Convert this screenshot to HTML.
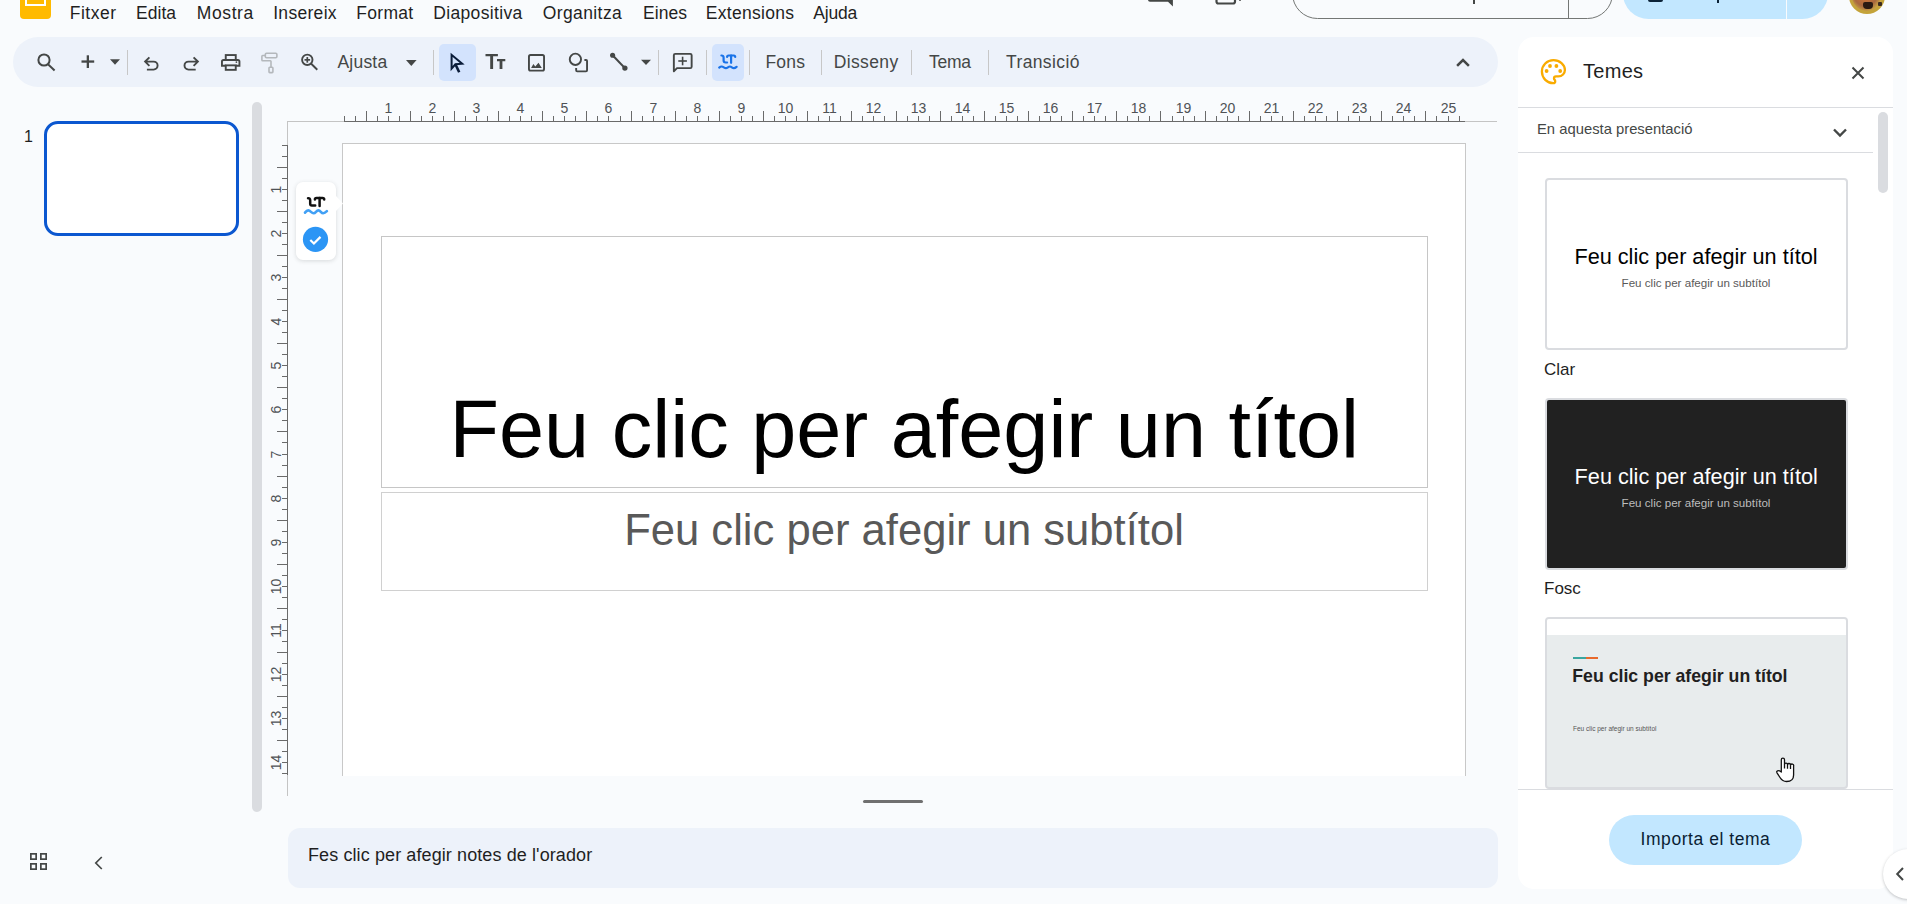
<!DOCTYPE html>
<html><head><meta charset="utf-8">
<style>
*{box-sizing:border-box;margin:0;padding:0}
html,body{width:1907px;height:904px;overflow:hidden;background:#f9fbfd;font-family:"Liberation Sans",sans-serif;color:#1f1f1f}
.a{position:absolute}
.menu{position:absolute;top:2.5px;font-size:17.5px;color:#1f1f1f;white-space:nowrap;line-height:20px}
.tb{position:absolute;left:13px;top:37px;width:1485px;height:50px;border-radius:25px;background:#edf2fa}
.sep{position:absolute;top:50px;width:1px;height:25px;background:#c7c7c7}
.tbt{position:absolute;top:51.8px;font-size:17.5px;color:#444746;white-space:nowrap;line-height:20px}
svg{position:absolute;overflow:visible}
</style></head><body>

<div class="a" style="left:20px;top:-14px;width:31px;height:33px;background:#ffba00;border-radius:4px"></div>
<div class="a" style="left:25.4px;top:-8px;width:20.2px;height:14.4px;border:2.4px solid #fff;border-top:none"></div>
<div class="menu" style="left:69.7px;letter-spacing:0.54px">Fitxer</div>
<div class="menu" style="left:136.0px;letter-spacing:0.05px">Edita</div>
<div class="menu" style="left:196.8px;letter-spacing:0.60px">Mostra</div>
<div class="menu" style="left:273.2px;letter-spacing:0.30px">Insereix</div>
<div class="menu" style="left:356.2px;letter-spacing:0.32px">Format</div>
<div class="menu" style="left:433.2px;letter-spacing:0.35px">Diapositiva</div>
<div class="menu" style="left:542.7px;letter-spacing:0.40px">Organitza</div>
<div class="menu" style="left:642.9px;letter-spacing:0.10px">Eines</div>
<div class="menu" style="left:705.8px;letter-spacing:0.28px">Extensions</div>
<div class="menu" style="left:813.3px;letter-spacing:-0.22px">Ajuda</div>
<svg style="left:0;top:0" width="1300" height="30"><path d="M1148 -12 H1172.9 V6.6 L1168 1.8 H1150 Q1148 1.8 1148 -0.2 Z" fill="#444746"/></svg>
<svg style="left:1210px;top:-20px" width="40" height="30"><rect x="6.5" y="6" width="18.5" height="17.5" rx="2" fill="none" stroke="#444746" stroke-width="2.2"/><circle cx="30" cy="20" r="1" fill="#444746"/></svg>
<div class="a" style="left:1292px;top:-32px;width:321px;height:51px;border:1.3px solid #747775;border-radius:26px"></div>
<div class="a" style="left:1567.5px;top:-32px;width:1.3px;height:51px;background:#747775"></div>
<div class="a" style="left:1473px;top:-5px;width:2px;height:8.5px;background:#444746"></div>
<div class="a" style="left:1623px;top:-32px;width:205px;height:51px;background:#c2e7ff;border-radius:26px"></div>
<div class="a" style="left:1786px;top:-32px;width:1.2px;height:51px;background:#f9fbfd"></div>
<div class="a" style="left:1648px;top:-11px;width:15px;height:13px;border:2.2px solid #0b2338;border-radius:2px"></div>
<div class="a" style="left:1716.5px;top:-6px;width:2px;height:9px;background:#0b2338"></div>
<div class="a" style="left:1848.7px;top:-22.8px;width:36.6px;height:36.6px;border-radius:50%;background:#c4a33a"></div>
<div class="a" style="left:1852px;top:-19.5px;width:30px;height:30px;border-radius:50%;background:radial-gradient(ellipse at 45% 30%,#c0703a 0 35%,#a8683f 55%,#caa545 75%,#c4a33a 100%)"></div>
<div class="a" style="left:1862.5px;top:2px;width:10px;height:6.5px;border-radius:2px 2px 4px 4px;background:#2a1a12"></div>
<div class="a" style="left:1878px;top:1.5px;width:3.5px;height:4px;border-radius:1px;background:#3a2a20"></div>
<div class="tb"></div>
<div class="sep" style="left:127px"></div>
<div class="sep" style="left:433px"></div>
<div class="sep" style="left:658px"></div>
<div class="sep" style="left:706px"></div>
<div class="sep" style="left:749px"></div>
<div class="sep" style="left:821px"></div>
<div class="sep" style="left:911px"></div>
<div class="sep" style="left:988px"></div>
<div class="a" style="left:439px;top:44px;width:37px;height:37px;border-radius:5px;background:#d3e3fd"></div>
<div class="a" style="left:712px;top:44px;width:32px;height:37px;border-radius:5px;background:#d3e3fd"></div>
<svg style="left:0;top:0" width="1907" height="100">
<g fill="none" stroke="#444746" stroke-width="2">
<circle cx="44" cy="60" r="5.6"/><line x1="48" y1="64.2" x2="54.6" y2="70.4"/>
</g>
<g fill="#444746">
<rect x="81.5" y="60.4" width="12.7" height="2.3"/><rect x="86.7" y="55.3" width="2.3" height="12.7"/>
<path d="M110 59.2h10l-5 5.5z"/>
<path d="M406 60h10.6l-5.3 6z"/>
<path d="M641 59.8h10l-5 5.2z"/>
</g>
<g fill="none" stroke="#444746" stroke-width="1.9">
<path d="M149.4 57.3 L145.1 61.6 L149.4 65.9 M145.1 61.6 H153.6 A4 4 0 0 1 153.6 69.6 H146.9"/>
<path d="M193.6 57.3 L197.9 61.6 L193.6 65.9 M197.9 61.6 H188.5 A4 4 0 0 0 188.5 69.6 H195.7"/>
<rect x="225.75" y="55.05" width="10" height="4.9"/>
<path d="M225.8 65.75 H221.95 V61.5 Q221.95 59.95 223.5 59.95 H237.9 Q239.45 59.95 239.45 61.5 V65.75 H235.7"/>
<rect x="225.75" y="65.35" width="10" height="4.5"/>
</g>
<circle cx="236.4" cy="62.1" r="0.9" fill="#444746"/>
<g fill="none" stroke="#b4b8bc" stroke-width="1.6">
<rect x="265.3" y="53.2" width="11.6" height="4.6" rx="1.2"/>
<path d="M265.3 55.5 H262.6 Q261.9 55.5 261.9 56.2 V60 Q261.9 60.7 262.6 60.7 H270.3 Q271 60.7 271 61.4 V67.3"/>
<rect x="269" y="67.3" width="3.9" height="5.3" rx="0.8"/>
</g>
<g fill="none" stroke="#444746" stroke-width="1.9">
<circle cx="307.3" cy="59.8" r="5.2"/><line x1="311.2" y1="63.7" x2="317.3" y2="69.7"/>
</g>
<g fill="#444746"><rect x="304.5" y="59" width="5.6" height="1.7"/><rect x="306.45" y="57.05" width="1.7" height="5.6"/></g>
<path d="M451.6 54.8 V68.6 L455.4 64.3 L462.2 63.7 Z" fill="none" stroke="#0b1d3a" stroke-width="2" stroke-linejoin="miter"/>
<line x1="455.3" y1="64" x2="459.2" y2="72.2" stroke="#0b1d3a" stroke-width="2.6"/>
<g fill="#444746">
<path d="M485.5 54h12.4v2.3h-4.8v12.6h-2.9v-12.6h-4.7z"/>
<path d="M497 59h8.3v2.2h-2.9v7.7h-2.8v-7.7h-2.6z"/>
</g>
<rect x="528.95" y="55.05" width="15.1" height="15.6" rx="1.6" fill="none" stroke="#444746" stroke-width="1.9"/>
<path d="M531.1 67.9 L533.4 64.1 L535.3 66.5 L538.5 62.8 L541.8 67.9 Z" fill="#444746"/>
<g fill="none" stroke="#444746" stroke-width="1.9">
<circle cx="575.4" cy="59.3" r="5.65"/>
<path d="M584.4 59.95 H586 Q587.05 59.95 587.05 61 V70.3 Q587.05 71.35 586 71.35 H577.2 Q576.15 71.35 576.15 70.3 V67.9"/>
</g>
<line x1="612.6" y1="55.2" x2="624.9" y2="68.1" stroke="#444746" stroke-width="2.1"/>
<circle cx="612.6" cy="55.2" r="2.55" fill="#444746"/><circle cx="624.9" cy="68.1" r="2.65" fill="#444746"/>
<path d="M673.85 71.3 V55.3 Q673.85 53.85 675.3 53.85 H690.2 Q691.65 53.85 691.65 55.3 V66.7 Q691.65 68.15 690.2 68.15 H677 Z" fill="none" stroke="#444746" stroke-width="1.9" stroke-linejoin="round"/>
<g fill="#444746"><rect x="678.3" y="60.2" width="8.6" height="1.6"/><rect x="681.8" y="56.7" width="1.6" height="8.6"/></g>
<g fill="none" stroke="#444746" stroke-width="2.5" stroke-linecap="square"><path d="M1458 65l5-5 5 5"/></g>
</svg>
<svg style="left:0;top:0" width="800" height="100"><g fill="none" stroke="#1a73e8" stroke-width="2.2" stroke-linecap="round" stroke-linejoin="round">
<path d="M721.4 55.5 Q723.6 55.4 723.6 57.8 V60.6 Q723.6 62.5 725.6 62.5 H727.1"/>
<path d="M727.1 56.9 Q727.1 55.5 728.5 55.5 H733.8 Q735.2 55.5 735.2 56.9"/>
<line x1="731.1" y1="55.5" x2="731.1" y2="62.8"/>
<path d="M719.2 67.6 C720 66.9 720.9 66.5 721.7 66.5 C723.3 66.5 724.3 68.2 725.9 68.2 C727.5 68.2 728.3 66.5 729.9 66.5 C731.5 66.5 732.2 68.2 733.8 68.2 C734.8 68.2 735.8 67.5 736.6 66.8"/>
</g></svg>
<div class="tbt" style="left:337.5px;letter-spacing:0.20px">Ajusta</div>
<div class="tbt" style="left:765.4px;letter-spacing:0.27px">Fons</div>
<div class="tbt" style="left:833.7px;letter-spacing:0.37px">Disseny</div>
<div class="tbt" style="left:929.0px;letter-spacing:-0.27px">Tema</div>
<div class="tbt" style="left:1006.0px;letter-spacing:0.38px">Transició</div>
<div class="a" style="left:24px;top:128px;font-size:16px;color:#1f1f1f;line-height:18px">1</div>
<div class="a" style="left:44px;top:121px;width:195px;height:115px;border:3px solid #0b57d0;border-radius:14px;background:#fff"></div>
<div class="a" style="left:252px;top:102px;width:10px;height:710px;border-radius:5px;background:#dadce0"></div>
<svg style="left:30px;top:853px" width="18" height="18"><g fill="none" stroke="#444746" stroke-width="1.7"><rect x="0.85" y="0.85" width="5.3" height="5.3"/><rect x="10.85" y="0.85" width="5.3" height="5.3"/><rect x="0.85" y="10.85" width="5.3" height="5.3"/><rect x="10.85" y="10.85" width="5.3" height="5.3"/></g></svg>
<svg style="left:90px;top:852px" width="20" height="20"><path d="M11.8 5l-6 6 6 6" fill="none" stroke="#444746" stroke-width="1.7"/></svg>
<svg style="left:0;top:0" width="1907" height="904"><g font-family="Liberation Sans" font-size="14" fill="#4f5256"><line x1="287" y1="121.5" x2="344" y2="121.5" stroke="#c4c4c4" stroke-width="1"/><line x1="1465" y1="121.5" x2="1497" y2="121.5" stroke="#c4c4c4" stroke-width="1"/><line x1="344" y1="121.5" x2="1465" y2="121.5" stroke="#6a6a6a" stroke-width="1"/><line x1="344.5" y1="116" x2="344.5" y2="122" stroke="#6a6a6a" stroke-width="1"/><line x1="355.5" y1="116" x2="355.5" y2="122" stroke="#6a6a6a" stroke-width="1"/><line x1="366.5" y1="111" x2="366.5" y2="122" stroke="#6a6a6a" stroke-width="1"/><line x1="377.5" y1="116" x2="377.5" y2="122" stroke="#6a6a6a" stroke-width="1"/><line x1="388.5" y1="116" x2="388.5" y2="122" stroke="#6a6a6a" stroke-width="1"/><line x1="399.5" y1="116" x2="399.5" y2="122" stroke="#6a6a6a" stroke-width="1"/><line x1="410.5" y1="111" x2="410.5" y2="122" stroke="#6a6a6a" stroke-width="1"/><line x1="421.5" y1="116" x2="421.5" y2="122" stroke="#6a6a6a" stroke-width="1"/><line x1="432.5" y1="116" x2="432.5" y2="122" stroke="#6a6a6a" stroke-width="1"/><line x1="443.5" y1="116" x2="443.5" y2="122" stroke="#6a6a6a" stroke-width="1"/><line x1="454.5" y1="111" x2="454.5" y2="122" stroke="#6a6a6a" stroke-width="1"/><line x1="465.5" y1="116" x2="465.5" y2="122" stroke="#6a6a6a" stroke-width="1"/><line x1="476.5" y1="116" x2="476.5" y2="122" stroke="#6a6a6a" stroke-width="1"/><line x1="487.5" y1="116" x2="487.5" y2="122" stroke="#6a6a6a" stroke-width="1"/><line x1="498.5" y1="111" x2="498.5" y2="122" stroke="#6a6a6a" stroke-width="1"/><line x1="509.5" y1="116" x2="509.5" y2="122" stroke="#6a6a6a" stroke-width="1"/><line x1="520.5" y1="116" x2="520.5" y2="122" stroke="#6a6a6a" stroke-width="1"/><line x1="531.5" y1="116" x2="531.5" y2="122" stroke="#6a6a6a" stroke-width="1"/><line x1="542.5" y1="111" x2="542.5" y2="122" stroke="#6a6a6a" stroke-width="1"/><line x1="553.5" y1="116" x2="553.5" y2="122" stroke="#6a6a6a" stroke-width="1"/><line x1="564.5" y1="116" x2="564.5" y2="122" stroke="#6a6a6a" stroke-width="1"/><line x1="575.5" y1="116" x2="575.5" y2="122" stroke="#6a6a6a" stroke-width="1"/><line x1="586.5" y1="111" x2="586.5" y2="122" stroke="#6a6a6a" stroke-width="1"/><line x1="597.5" y1="116" x2="597.5" y2="122" stroke="#6a6a6a" stroke-width="1"/><line x1="608.5" y1="116" x2="608.5" y2="122" stroke="#6a6a6a" stroke-width="1"/><line x1="620.5" y1="116" x2="620.5" y2="122" stroke="#6a6a6a" stroke-width="1"/><line x1="631.5" y1="111" x2="631.5" y2="122" stroke="#6a6a6a" stroke-width="1"/><line x1="642.5" y1="116" x2="642.5" y2="122" stroke="#6a6a6a" stroke-width="1"/><line x1="653.5" y1="116" x2="653.5" y2="122" stroke="#6a6a6a" stroke-width="1"/><line x1="664.5" y1="116" x2="664.5" y2="122" stroke="#6a6a6a" stroke-width="1"/><line x1="675.5" y1="111" x2="675.5" y2="122" stroke="#6a6a6a" stroke-width="1"/><line x1="686.5" y1="116" x2="686.5" y2="122" stroke="#6a6a6a" stroke-width="1"/><line x1="697.5" y1="116" x2="697.5" y2="122" stroke="#6a6a6a" stroke-width="1"/><line x1="708.5" y1="116" x2="708.5" y2="122" stroke="#6a6a6a" stroke-width="1"/><line x1="719.5" y1="111" x2="719.5" y2="122" stroke="#6a6a6a" stroke-width="1"/><line x1="730.5" y1="116" x2="730.5" y2="122" stroke="#6a6a6a" stroke-width="1"/><line x1="741.5" y1="116" x2="741.5" y2="122" stroke="#6a6a6a" stroke-width="1"/><line x1="752.5" y1="116" x2="752.5" y2="122" stroke="#6a6a6a" stroke-width="1"/><line x1="763.5" y1="111" x2="763.5" y2="122" stroke="#6a6a6a" stroke-width="1"/><line x1="774.5" y1="116" x2="774.5" y2="122" stroke="#6a6a6a" stroke-width="1"/><line x1="785.5" y1="116" x2="785.5" y2="122" stroke="#6a6a6a" stroke-width="1"/><line x1="796.5" y1="116" x2="796.5" y2="122" stroke="#6a6a6a" stroke-width="1"/><line x1="807.5" y1="111" x2="807.5" y2="122" stroke="#6a6a6a" stroke-width="1"/><line x1="818.5" y1="116" x2="818.5" y2="122" stroke="#6a6a6a" stroke-width="1"/><line x1="829.5" y1="116" x2="829.5" y2="122" stroke="#6a6a6a" stroke-width="1"/><line x1="840.5" y1="116" x2="840.5" y2="122" stroke="#6a6a6a" stroke-width="1"/><line x1="851.5" y1="111" x2="851.5" y2="122" stroke="#6a6a6a" stroke-width="1"/><line x1="862.5" y1="116" x2="862.5" y2="122" stroke="#6a6a6a" stroke-width="1"/><line x1="873.5" y1="116" x2="873.5" y2="122" stroke="#6a6a6a" stroke-width="1"/><line x1="884.5" y1="116" x2="884.5" y2="122" stroke="#6a6a6a" stroke-width="1"/><line x1="896.5" y1="111" x2="896.5" y2="122" stroke="#6a6a6a" stroke-width="1"/><line x1="907.5" y1="116" x2="907.5" y2="122" stroke="#6a6a6a" stroke-width="1"/><line x1="918.5" y1="116" x2="918.5" y2="122" stroke="#6a6a6a" stroke-width="1"/><line x1="929.5" y1="116" x2="929.5" y2="122" stroke="#6a6a6a" stroke-width="1"/><line x1="940.5" y1="111" x2="940.5" y2="122" stroke="#6a6a6a" stroke-width="1"/><line x1="951.5" y1="116" x2="951.5" y2="122" stroke="#6a6a6a" stroke-width="1"/><line x1="962.5" y1="116" x2="962.5" y2="122" stroke="#6a6a6a" stroke-width="1"/><line x1="973.5" y1="116" x2="973.5" y2="122" stroke="#6a6a6a" stroke-width="1"/><line x1="984.5" y1="111" x2="984.5" y2="122" stroke="#6a6a6a" stroke-width="1"/><line x1="995.5" y1="116" x2="995.5" y2="122" stroke="#6a6a6a" stroke-width="1"/><line x1="1006.5" y1="116" x2="1006.5" y2="122" stroke="#6a6a6a" stroke-width="1"/><line x1="1017.5" y1="116" x2="1017.5" y2="122" stroke="#6a6a6a" stroke-width="1"/><line x1="1028.5" y1="111" x2="1028.5" y2="122" stroke="#6a6a6a" stroke-width="1"/><line x1="1039.5" y1="116" x2="1039.5" y2="122" stroke="#6a6a6a" stroke-width="1"/><line x1="1050.5" y1="116" x2="1050.5" y2="122" stroke="#6a6a6a" stroke-width="1"/><line x1="1061.5" y1="116" x2="1061.5" y2="122" stroke="#6a6a6a" stroke-width="1"/><line x1="1072.5" y1="111" x2="1072.5" y2="122" stroke="#6a6a6a" stroke-width="1"/><line x1="1083.5" y1="116" x2="1083.5" y2="122" stroke="#6a6a6a" stroke-width="1"/><line x1="1094.5" y1="116" x2="1094.5" y2="122" stroke="#6a6a6a" stroke-width="1"/><line x1="1105.5" y1="116" x2="1105.5" y2="122" stroke="#6a6a6a" stroke-width="1"/><line x1="1116.5" y1="111" x2="1116.5" y2="122" stroke="#6a6a6a" stroke-width="1"/><line x1="1127.5" y1="116" x2="1127.5" y2="122" stroke="#6a6a6a" stroke-width="1"/><line x1="1138.5" y1="116" x2="1138.5" y2="122" stroke="#6a6a6a" stroke-width="1"/><line x1="1149.5" y1="116" x2="1149.5" y2="122" stroke="#6a6a6a" stroke-width="1"/><line x1="1160.5" y1="111" x2="1160.5" y2="122" stroke="#6a6a6a" stroke-width="1"/><line x1="1172.5" y1="116" x2="1172.5" y2="122" stroke="#6a6a6a" stroke-width="1"/><line x1="1183.5" y1="116" x2="1183.5" y2="122" stroke="#6a6a6a" stroke-width="1"/><line x1="1194.5" y1="116" x2="1194.5" y2="122" stroke="#6a6a6a" stroke-width="1"/><line x1="1205.5" y1="111" x2="1205.5" y2="122" stroke="#6a6a6a" stroke-width="1"/><line x1="1216.5" y1="116" x2="1216.5" y2="122" stroke="#6a6a6a" stroke-width="1"/><line x1="1227.5" y1="116" x2="1227.5" y2="122" stroke="#6a6a6a" stroke-width="1"/><line x1="1238.5" y1="116" x2="1238.5" y2="122" stroke="#6a6a6a" stroke-width="1"/><line x1="1249.5" y1="111" x2="1249.5" y2="122" stroke="#6a6a6a" stroke-width="1"/><line x1="1260.5" y1="116" x2="1260.5" y2="122" stroke="#6a6a6a" stroke-width="1"/><line x1="1271.5" y1="116" x2="1271.5" y2="122" stroke="#6a6a6a" stroke-width="1"/><line x1="1282.5" y1="116" x2="1282.5" y2="122" stroke="#6a6a6a" stroke-width="1"/><line x1="1293.5" y1="111" x2="1293.5" y2="122" stroke="#6a6a6a" stroke-width="1"/><line x1="1304.5" y1="116" x2="1304.5" y2="122" stroke="#6a6a6a" stroke-width="1"/><line x1="1315.5" y1="116" x2="1315.5" y2="122" stroke="#6a6a6a" stroke-width="1"/><line x1="1326.5" y1="116" x2="1326.5" y2="122" stroke="#6a6a6a" stroke-width="1"/><line x1="1337.5" y1="111" x2="1337.5" y2="122" stroke="#6a6a6a" stroke-width="1"/><line x1="1348.5" y1="116" x2="1348.5" y2="122" stroke="#6a6a6a" stroke-width="1"/><line x1="1359.5" y1="116" x2="1359.5" y2="122" stroke="#6a6a6a" stroke-width="1"/><line x1="1370.5" y1="116" x2="1370.5" y2="122" stroke="#6a6a6a" stroke-width="1"/><line x1="1381.5" y1="111" x2="1381.5" y2="122" stroke="#6a6a6a" stroke-width="1"/><line x1="1392.5" y1="116" x2="1392.5" y2="122" stroke="#6a6a6a" stroke-width="1"/><line x1="1403.5" y1="116" x2="1403.5" y2="122" stroke="#6a6a6a" stroke-width="1"/><line x1="1414.5" y1="116" x2="1414.5" y2="122" stroke="#6a6a6a" stroke-width="1"/><line x1="1425.5" y1="111" x2="1425.5" y2="122" stroke="#6a6a6a" stroke-width="1"/><line x1="1436.5" y1="116" x2="1436.5" y2="122" stroke="#6a6a6a" stroke-width="1"/><line x1="1448.5" y1="116" x2="1448.5" y2="122" stroke="#6a6a6a" stroke-width="1"/><line x1="1459.5" y1="116" x2="1459.5" y2="122" stroke="#6a6a6a" stroke-width="1"/><text x="388.5" y="113" text-anchor="middle">1</text><text x="432.5" y="113" text-anchor="middle">2</text><text x="476.5" y="113" text-anchor="middle">3</text><text x="520.5" y="113" text-anchor="middle">4</text><text x="564.5" y="113" text-anchor="middle">5</text><text x="608.5" y="113" text-anchor="middle">6</text><text x="653.5" y="113" text-anchor="middle">7</text><text x="697.5" y="113" text-anchor="middle">8</text><text x="741.5" y="113" text-anchor="middle">9</text><text x="785.5" y="113" text-anchor="middle">10</text><text x="829.5" y="113" text-anchor="middle">11</text><text x="873.5" y="113" text-anchor="middle">12</text><text x="918.5" y="113" text-anchor="middle">13</text><text x="962.5" y="113" text-anchor="middle">14</text><text x="1006.5" y="113" text-anchor="middle">15</text><text x="1050.5" y="113" text-anchor="middle">16</text><text x="1094.5" y="113" text-anchor="middle">17</text><text x="1138.5" y="113" text-anchor="middle">18</text><text x="1183.5" y="113" text-anchor="middle">19</text><text x="1227.5" y="113" text-anchor="middle">20</text><text x="1271.5" y="113" text-anchor="middle">21</text><text x="1315.5" y="113" text-anchor="middle">22</text><text x="1359.5" y="113" text-anchor="middle">23</text><text x="1403.5" y="113" text-anchor="middle">24</text><text x="1448.5" y="113" text-anchor="middle">25</text><line x1="287.5" y1="121" x2="287.5" y2="145" stroke="#c4c4c4" stroke-width="1"/><line x1="287.5" y1="775" x2="287.5" y2="796" stroke="#c4c4c4" stroke-width="1"/><line x1="287.5" y1="145" x2="287.5" y2="775" stroke="#6a6a6a" stroke-width="1"/><line x1="282" y1="145.5" x2="288" y2="145.5" stroke="#6a6a6a" stroke-width="1"/><line x1="282" y1="156.5" x2="288" y2="156.5" stroke="#6a6a6a" stroke-width="1"/><line x1="277" y1="167.5" x2="288" y2="167.5" stroke="#6a6a6a" stroke-width="1"/><line x1="282" y1="178.5" x2="288" y2="178.5" stroke="#6a6a6a" stroke-width="1"/><line x1="282" y1="189.5" x2="288" y2="189.5" stroke="#6a6a6a" stroke-width="1"/><line x1="282" y1="200.5" x2="288" y2="200.5" stroke="#6a6a6a" stroke-width="1"/><line x1="277" y1="211.5" x2="288" y2="211.5" stroke="#6a6a6a" stroke-width="1"/><line x1="282" y1="222.5" x2="288" y2="222.5" stroke="#6a6a6a" stroke-width="1"/><line x1="282" y1="233.5" x2="288" y2="233.5" stroke="#6a6a6a" stroke-width="1"/><line x1="282" y1="244.5" x2="288" y2="244.5" stroke="#6a6a6a" stroke-width="1"/><line x1="277" y1="255.5" x2="288" y2="255.5" stroke="#6a6a6a" stroke-width="1"/><line x1="282" y1="266.5" x2="288" y2="266.5" stroke="#6a6a6a" stroke-width="1"/><line x1="282" y1="277.5" x2="288" y2="277.5" stroke="#6a6a6a" stroke-width="1"/><line x1="282" y1="288.5" x2="288" y2="288.5" stroke="#6a6a6a" stroke-width="1"/><line x1="277" y1="299.5" x2="288" y2="299.5" stroke="#6a6a6a" stroke-width="1"/><line x1="282" y1="310.5" x2="288" y2="310.5" stroke="#6a6a6a" stroke-width="1"/><line x1="282" y1="321.5" x2="288" y2="321.5" stroke="#6a6a6a" stroke-width="1"/><line x1="282" y1="332.5" x2="288" y2="332.5" stroke="#6a6a6a" stroke-width="1"/><line x1="277" y1="343.5" x2="288" y2="343.5" stroke="#6a6a6a" stroke-width="1"/><line x1="282" y1="354.5" x2="288" y2="354.5" stroke="#6a6a6a" stroke-width="1"/><line x1="282" y1="365.5" x2="288" y2="365.5" stroke="#6a6a6a" stroke-width="1"/><line x1="282" y1="376.5" x2="288" y2="376.5" stroke="#6a6a6a" stroke-width="1"/><line x1="277" y1="387.5" x2="288" y2="387.5" stroke="#6a6a6a" stroke-width="1"/><line x1="282" y1="398.5" x2="288" y2="398.5" stroke="#6a6a6a" stroke-width="1"/><line x1="282" y1="409.5" x2="288" y2="409.5" stroke="#6a6a6a" stroke-width="1"/><line x1="282" y1="420.5" x2="288" y2="420.5" stroke="#6a6a6a" stroke-width="1"/><line x1="277" y1="431.5" x2="288" y2="431.5" stroke="#6a6a6a" stroke-width="1"/><line x1="282" y1="442.5" x2="288" y2="442.5" stroke="#6a6a6a" stroke-width="1"/><line x1="282" y1="454.5" x2="288" y2="454.5" stroke="#6a6a6a" stroke-width="1"/><line x1="282" y1="465.5" x2="288" y2="465.5" stroke="#6a6a6a" stroke-width="1"/><line x1="277" y1="476.5" x2="288" y2="476.5" stroke="#6a6a6a" stroke-width="1"/><line x1="282" y1="487.5" x2="288" y2="487.5" stroke="#6a6a6a" stroke-width="1"/><line x1="282" y1="498.5" x2="288" y2="498.5" stroke="#6a6a6a" stroke-width="1"/><line x1="282" y1="509.5" x2="288" y2="509.5" stroke="#6a6a6a" stroke-width="1"/><line x1="277" y1="520.5" x2="288" y2="520.5" stroke="#6a6a6a" stroke-width="1"/><line x1="282" y1="531.5" x2="288" y2="531.5" stroke="#6a6a6a" stroke-width="1"/><line x1="282" y1="542.5" x2="288" y2="542.5" stroke="#6a6a6a" stroke-width="1"/><line x1="282" y1="553.5" x2="288" y2="553.5" stroke="#6a6a6a" stroke-width="1"/><line x1="277" y1="564.5" x2="288" y2="564.5" stroke="#6a6a6a" stroke-width="1"/><line x1="282" y1="575.5" x2="288" y2="575.5" stroke="#6a6a6a" stroke-width="1"/><line x1="282" y1="586.5" x2="288" y2="586.5" stroke="#6a6a6a" stroke-width="1"/><line x1="282" y1="597.5" x2="288" y2="597.5" stroke="#6a6a6a" stroke-width="1"/><line x1="277" y1="608.5" x2="288" y2="608.5" stroke="#6a6a6a" stroke-width="1"/><line x1="282" y1="619.5" x2="288" y2="619.5" stroke="#6a6a6a" stroke-width="1"/><line x1="282" y1="630.5" x2="288" y2="630.5" stroke="#6a6a6a" stroke-width="1"/><line x1="282" y1="641.5" x2="288" y2="641.5" stroke="#6a6a6a" stroke-width="1"/><line x1="277" y1="652.5" x2="288" y2="652.5" stroke="#6a6a6a" stroke-width="1"/><line x1="282" y1="663.5" x2="288" y2="663.5" stroke="#6a6a6a" stroke-width="1"/><line x1="282" y1="674.5" x2="288" y2="674.5" stroke="#6a6a6a" stroke-width="1"/><line x1="282" y1="685.5" x2="288" y2="685.5" stroke="#6a6a6a" stroke-width="1"/><line x1="277" y1="696.5" x2="288" y2="696.5" stroke="#6a6a6a" stroke-width="1"/><line x1="282" y1="707.5" x2="288" y2="707.5" stroke="#6a6a6a" stroke-width="1"/><line x1="282" y1="718.5" x2="288" y2="718.5" stroke="#6a6a6a" stroke-width="1"/><line x1="282" y1="729.5" x2="288" y2="729.5" stroke="#6a6a6a" stroke-width="1"/><line x1="277" y1="740.5" x2="288" y2="740.5" stroke="#6a6a6a" stroke-width="1"/><line x1="282" y1="751.5" x2="288" y2="751.5" stroke="#6a6a6a" stroke-width="1"/><line x1="282" y1="762.5" x2="288" y2="762.5" stroke="#6a6a6a" stroke-width="1"/><line x1="282" y1="773.5" x2="288" y2="773.5" stroke="#6a6a6a" stroke-width="1"/><text x="0" y="0" text-anchor="middle" transform="translate(281 189.5) rotate(-90)">1</text><text x="0" y="0" text-anchor="middle" transform="translate(281 233.5) rotate(-90)">2</text><text x="0" y="0" text-anchor="middle" transform="translate(281 277.5) rotate(-90)">3</text><text x="0" y="0" text-anchor="middle" transform="translate(281 321.5) rotate(-90)">4</text><text x="0" y="0" text-anchor="middle" transform="translate(281 365.5) rotate(-90)">5</text><text x="0" y="0" text-anchor="middle" transform="translate(281 409.5) rotate(-90)">6</text><text x="0" y="0" text-anchor="middle" transform="translate(281 454.5) rotate(-90)">7</text><text x="0" y="0" text-anchor="middle" transform="translate(281 498.5) rotate(-90)">8</text><text x="0" y="0" text-anchor="middle" transform="translate(281 542.5) rotate(-90)">9</text><text x="0" y="0" text-anchor="middle" transform="translate(281 586.5) rotate(-90)">10</text><text x="0" y="0" text-anchor="middle" transform="translate(281 630.5) rotate(-90)">11</text><text x="0" y="0" text-anchor="middle" transform="translate(281 674.5) rotate(-90)">12</text><text x="0" y="0" text-anchor="middle" transform="translate(281 718.5) rotate(-90)">13</text><text x="0" y="0" text-anchor="middle" transform="translate(281 762.5) rotate(-90)">14</text></g></svg>
<div class="a" style="left:342px;top:143px;width:1124px;height:632.5px;background:#fff;border:1px solid #c8c8c8;border-bottom:none"></div>
<div class="a" style="left:381px;top:236px;width:1047px;height:252px;border:1px solid #c6c6c6"></div>
<div class="a" style="left:381px;top:492px;width:1047px;height:99px;border:1px solid #d0d0d0"></div>
<div class="a" style="left:381.3px;top:382.5px;width:1046px;text-align:center;font-size:81px;line-height:92px;color:#000;white-space:nowrap">Feu clic per afegir un títol</div>
<div class="a" style="left:381px;top:505px;width:1046px;text-align:center;font-size:43.6px;line-height:50px;color:#595959;white-space:nowrap">Feu clic per afegir un subtítol</div>
<div class="a" style="left:296px;top:182px;width:40px;height:78px;border-radius:7px;background:#fff;box-shadow:0 1px 4px rgba(60,64,67,.18)"></div>
<svg style="left:336px;top:196px" width="8" height="16"><path d="M0 0l7 7.5-7 7.5z" fill="#fff"/></svg>
<svg style="left:300px;top:192px" width="32" height="64">
<g transform="translate(-300 -192)" fill="none" stroke-linecap="round" stroke-linejoin="round">
<g stroke="#111" stroke-width="2.5"><path d="M308 198.2 Q310.2 198 310.2 200.5 V203.8 Q310.2 205.6 312 205.6 H315.2"/><path d="M314.9 199.6 Q314.9 198 316.5 198 H322.6 Q324.2 198 324.2 199.6"/><path d="M319.6 198 V206.1"/></g>
<path stroke="#41a0f5" stroke-width="2.6" d="M305 212.6 C306 211.3 307.2 210.4 308.3 210.4 C310.5 210.4 311.4 213.3 313.6 213.3 C315.8 213.3 316.2 210.4 318.4 210.4 C320.6 210.4 321 213.3 323.2 213.3 C324.6 213.3 325.8 212.3 326.9 211.2"/>
</g>
<circle cx="15.5" cy="47.4" r="12.6" fill="#2b95f5"/>
<path d="M10.3 48l3.6 3.5 6.6-6.6" fill="none" stroke="#fff" stroke-width="2.2"/>
</svg>
<div class="a" style="left:863px;top:800px;width:60px;height:3px;border-radius:2px;background:#707070"></div>
<div class="a" style="left:288px;top:828px;width:1210px;height:60px;border-radius:12px;background:#edf2fa"></div>
<div class="a" style="left:308px;top:845px;font-size:18px;letter-spacing:0.1px;line-height:20px;color:#1f1f1f;white-space:nowrap">Fes clic per afegir notes de l'orador</div>
<div class="a" style="left:1518px;top:37px;width:375px;height:851.5px;border-radius:16px;background:#fff"></div>
<svg style="left:1538.7px;top:57px" width="30" height="30">
<path d="M14.5 3.2c-6.6 0-11.6 5.1-11.6 11.4 0 6.5 5.2 11.6 11.3 11.6 1.2 0 2-0.9 2-2 0-0.6-0.3-1-0.6-1.4-0.4-0.4-0.6-0.9-0.6-1.4 0-1.1 0.9-2 2-2h2.4c3.7 0 6.5-2.9 6.5-6.4 0-5.5-5.2-9.8-11.4-9.8z" fill="none" stroke="#f9ab00" stroke-width="2.3"/>
<g fill="#f9ab00"><circle cx="7.6" cy="14" r="1.9"/><circle cx="11" cy="9" r="1.9"/><circle cx="17.4" cy="9" r="1.9"/><circle cx="21.2" cy="14" r="1.9"/></g>
</svg>
<div class="a" style="left:1583px;top:60px;font-size:20px;letter-spacing:0.3px;line-height:22px;color:#1f1f1f">Temes</div>
<svg style="left:1850px;top:65px" width="16" height="16"><path d="M2.5 2.5l11 11M13.5 2.5l-11 11" stroke="#444746" stroke-width="2"/></svg>
<div class="a" style="left:1518px;top:106.5px;width:375px;height:1px;background:#dadce0"></div>
<div class="a" style="left:1537px;top:121.3px;font-size:14.8px;line-height:17px;color:#444746">En aquesta presentació</div>
<svg style="left:1830px;top:125px" width="20" height="16"><path d="M4 4.5l6 6 6-6" fill="none" stroke="#444746" stroke-width="2.4"/></svg>
<div class="a" style="left:1518px;top:152px;width:355px;height:1px;background:#dadce0"></div>
<div class="a" style="left:1878px;top:112px;width:10px;height:81px;border-radius:5px;background:#dadce0"></div>
<div class="a" style="left:1544.5px;top:178px;width:303px;height:172px;border:2px solid #dadce0;border-radius:4px;background:#fff;overflow:hidden"></div>
<div class="a" style="left:1546px;top:244px;width:300px;text-align:center;font-size:21.66px;line-height:26px;color:#000;white-space:nowrap">Feu clic per afegir un títol</div>
<div class="a" style="left:1546px;top:276px;width:300px;text-align:center;font-size:11.6px;line-height:14px;color:#595959;white-space:nowrap">Feu clic per afegir un subtítol</div>
<div class="a" style="left:1544px;top:360px;font-size:17px;line-height:20px;color:#1f1f1f">Clar</div>
<div class="a" style="left:1544.5px;top:397.5px;width:303px;height:172px;border:2px solid #dadce0;border-radius:4px;background:#212121;overflow:hidden"></div>
<div class="a" style="left:1546.2px;top:463.8px;width:300px;text-align:center;font-size:21.66px;line-height:26px;color:#fff;white-space:nowrap">Feu clic per afegir un títol</div>
<div class="a" style="left:1546px;top:495.6px;width:300px;text-align:center;font-size:11.6px;line-height:14px;color:#bdbdbd;white-space:nowrap">Feu clic per afegir un subtítol</div>
<div class="a" style="left:1544px;top:579px;font-size:17px;line-height:20px;color:#1f1f1f">Fosc</div>
<div class="a" style="left:1544.5px;top:616.5px;width:303px;height:172px;border:2px solid #dadce0;border-radius:4px;background:#e8eced;overflow:hidden"><div style="position:absolute;left:0;top:0;width:100%;height:16px;background:#fff"></div></div>
<div class="a" style="left:1573px;top:656.5px;width:13px;height:2px;background:#3aa6a0"></div><div class="a" style="left:1586px;top:656.5px;width:12px;height:2px;background:#e8692c"></div>
<div class="a" style="left:1572.3px;top:666.3px;font-size:17.7px;font-weight:bold;line-height:20px;color:#1f2020;white-space:nowrap">Feu clic per afegir un títol</div>
<div class="a" style="left:1573px;top:725px;font-size:6.5px;line-height:8px;color:#555;white-space:nowrap">Feu clic per afegir un subtítol</div>
<svg style="left:0;top:0" width="1907" height="904"><g fill="none" stroke="#111" stroke-width="1.3" stroke-linejoin="round">
<path fill="#fff" d="M1781.3 772 V759.8 A1.6 1.6 0 0 1 1784.5 759.8 V764.5 A1.5 1.5 0 0 1 1787.5 764.8 A1.5 1.5 0 0 1 1790.5 765.2 A1.55 1.55 0 0 1 1793.6 766 V775 Q1793.6 781.5 1786.5 781.5 Q1782.5 781.5 1780 777.5 L1777 772.8 Q1776.2 771.3 1777.6 770.8 Q1779 770.3 1781.3 772 Z"/>
<path d="M1784.5 764.5 V768.5 M1787.5 764.8 V768.8 M1790.5 765.2 V769"/>
</g></svg>
<div class="a" style="left:1518px;top:788.5px;width:375px;height:1px;background:#dadce0"></div>
<div class="a" style="left:1609px;top:815px;width:193px;height:50px;border-radius:25px;background:#c2e7ff"></div>
<div class="a" style="left:1609px;top:829px;width:193px;text-align:center;font-size:17.5px;letter-spacing:0.55px;line-height:20px;color:#0a1d33;white-space:nowrap">Importa el tema</div>
<div class="a" style="left:1883px;top:849px;width:50px;height:50px;border-radius:50%;background:#fff;box-shadow:0 1px 3px rgba(60,64,67,.3)"></div>
<svg style="left:1892px;top:864px" width="15" height="20"><path d="M11 4l-5.8 6 5.8 6" fill="none" stroke="#444746" stroke-width="2"/></svg>
</body></html>
